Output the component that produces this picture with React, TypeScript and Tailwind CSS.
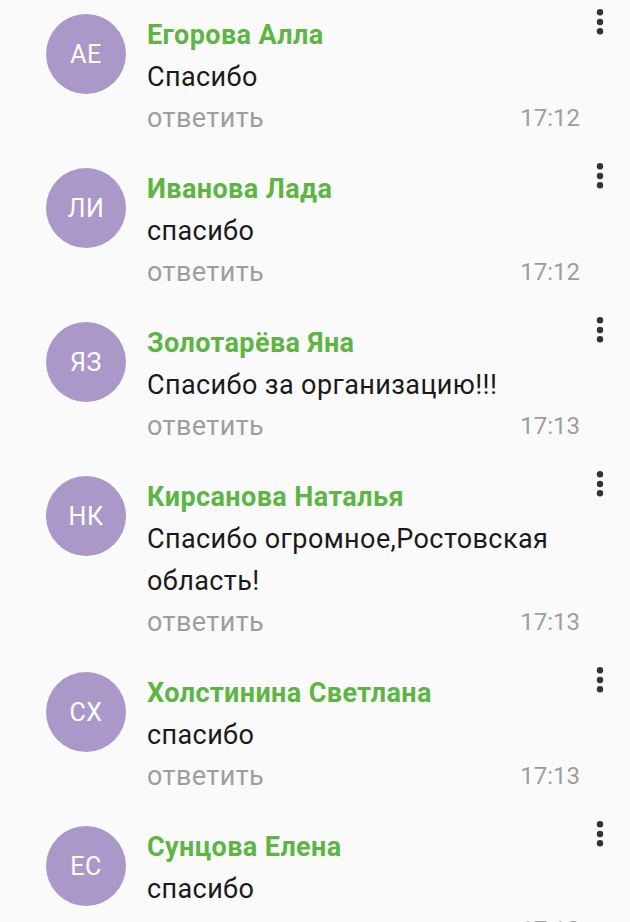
import React from "react";

type Item = { initials: string; name: string; text: string; time: string };

const items: Item[] = [
  { initials: "АЕ", name: "Егорова Алла", text: "Спасибо", time: "17:12" },
  { initials: "ЛИ", name: "Иванова Лада", text: "спасибо", time: "17:12" },
  { initials: "ЯЗ", name: "Золотарёва Яна", text: "Спасибо за организацию!!!", time: "17:13" },
  { initials: "НК", name: "Кирсанова Наталья", text: "Спасибо огромное,Ростовская область!", time: "17:13" },
  { initials: "СХ", name: "Холстинина Светлана", text: "спасибо", time: "17:13" },
  { initials: "ЕС", name: "Сунцова Елена", text: "спасибо", time: "17:13" },
];

function Dots() {
  return (
    <svg width="8" height="26" viewBox="0 0 8 26" className="absolute right-[26px] top-[9px]">
      <circle cx="4" cy="3.3" r="3.2" fill="#333333" />
      <circle cx="4" cy="13" r="3.2" fill="#333333" />
      <circle cx="4" cy="22.3" r="3.2" fill="#333333" />
    </svg>
  );
}

function Row({ item }: { item: Item }) {
  return (
    <div className="relative flex pl-[46px] pr-[50px] pt-[14px] pb-[16px]">
      <div className="w-[80px] h-[80px] shrink-0 rounded-full bg-[#a998c8] flex items-center justify-center text-white text-[25px] leading-none tracking-[0.5px]">
        {item.initials}
      </div>
      <div className="ml-[21px] flex-1 flex flex-col">
        <div className="h-[42px] text-[27px] leading-[42px] font-bold tracking-[0.4px] text-[#5db544]">{item.name}</div>
        <div className="text-[27px] leading-[42px] tracking-[0.4px] text-[#1a1a1a] pr-[10px]">{item.text}</div>
        <div className="h-[40px] flex justify-between items-center text-[#9e9e9e]">
          <span className="text-[27px] leading-[40px] tracking-[0.4px]">ответить</span>
          <span className="text-[24px] leading-[40px]">{item.time}</span>
        </div>
      </div>
      <Dots />
    </div>
  );
}

export default function App() {
  return (
    <div
      className="w-[630px] h-[922px] overflow-hidden bg-[#fafafa]"
      style={{ fontFamily: "Roboto, 'Noto Sans', sans-serif" }}
    >
      {items.map((it, i) => (
        <Row key={i} item={it} />
      ))}
    </div>
  );
}
